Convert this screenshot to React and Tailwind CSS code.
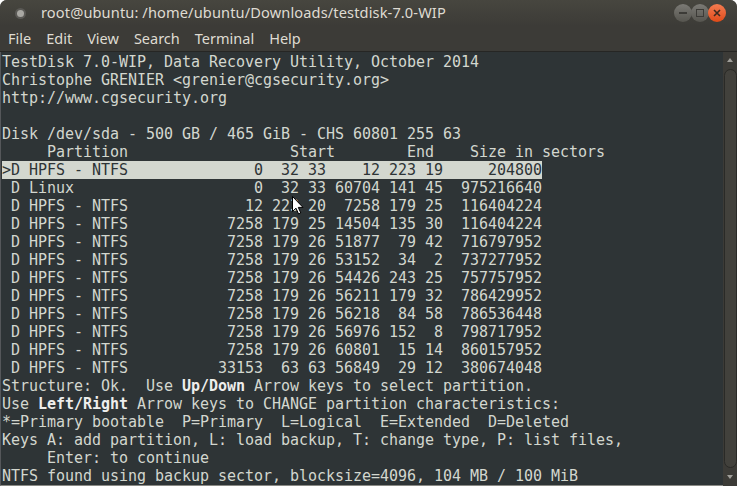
import React from "react";

const rows = [
  [">", "HPFS - NTFS", 0, 32, 33, 12, 223, 19, 204800],
  [" ", "Linux", 0, 32, 33, 60704, 141, 45, 975216640],
  [" ", "HPFS - NTFS", 12, 223, 20, 7258, 179, 25, 116404224],
  [" ", "HPFS - NTFS", 7258, 179, 25, 14504, 135, 30, 116404224],
  [" ", "HPFS - NTFS", 7258, 179, 26, 51877, 79, 42, 716797952],
  [" ", "HPFS - NTFS", 7258, 179, 26, 53152, 34, 2, 737277952],
  [" ", "HPFS - NTFS", 7258, 179, 26, 54426, 243, 25, 757757952],
  [" ", "HPFS - NTFS", 7258, 179, 26, 56211, 179, 32, 786429952],
  [" ", "HPFS - NTFS", 7258, 179, 26, 56218, 84, 58, 786536448],
  [" ", "HPFS - NTFS", 7258, 179, 26, 56976, 152, 8, 798717952],
  [" ", "HPFS - NTFS", 7258, 179, 26, 60801, 15, 14, 860157952],
  [" ", "HPFS - NTFS", 33153, 63, 63, 56849, 29, 12, 380674048],
];

const fmt = (r) => {
  const p = (v, n) => String(v).padStart(n);
  return (
    r[0] + "D " + r[1].padEnd(20) + " " + p(r[2], 5) + " " + p(r[3], 3) + " " + p(r[4], 2) +
    " " + p(r[5], 5) + " " + p(r[6], 3) + " " + p(r[7], 2) + " " + p(r[8], 10)
  );
};

const menus = ["File", "Edit", "View", "Search", "Terminal", "Help"];

function Line({ children }) {
  return <div className="h-[18px] leading-[18px]">{children}</div>;
}

export default function App() {
  return (
    <div className="w-[737px] h-[486px] bg-white overflow-hidden">
      <div className="w-full h-full flex flex-col rounded-t-[7px] overflow-hidden bg-[#3c3b37]">
        {/* title bar */}
        <div className="h-[27px] flex items-center bg-gradient-to-b from-[#47463f] to-[#3c3b37] font-['Noto_Sans',sans-serif]">
          <div className="ml-[15px] w-[11px] h-[11px] rounded-full bg-[#5a5955] flex items-center justify-center">
            <div className="w-[7px] h-[7px] rounded-full bg-[#a9a8a3]" />
          </div>
          <div className="ml-[15px] text-[14.6px] text-[#dfdbd2] tracking-[0.12px]">
            root@ubuntu: /home/ubuntu/Downloads/testdisk-7.0-WIP
          </div>
          <div className="ml-auto mr-[11px] flex items-center">
            <div className="w-[18px] h-[18px] rounded-full bg-gradient-to-b from-[#7b7a75] to-[#56554f] flex items-center justify-center">
              <div className="w-[8px] h-[2px] bg-[#3c3b37]" />
            </div>
            <div className="-ml-px w-[18px] h-[18px] rounded-full bg-gradient-to-b from-[#7b7a75] to-[#56554f] flex items-center justify-center">
              <div className="w-[8px] h-[8px] border-[1.5px] border-[#3c3b37]" />
            </div>
            <div className="-ml-px w-[18px] h-[18px] rounded-full bg-gradient-to-b from-[#f47b4f] to-[#df4a16] flex items-center justify-center">
              <svg width="8" height="8" viewBox="0 0 8 8">
                <path d="M1 1L7 7M7 1L1 7" stroke="#3c2a20" strokeWidth="1.6" />
              </svg>
            </div>
          </div>
        </div>
        {/* menu bar */}
        <div className="h-[25px] flex items-center gap-[15px] pl-[8px] text-[14.5px] text-[#dfdbd2] font-['Noto_Sans',sans-serif]">
          {menus.map((m) => (
            <span key={m}>{m}</span>
          ))}
        </div>
        {/* terminal + scrollbar */}
        <div className="flex-1 flex border-t border-[#262624]">
          <div className="relative flex-1 bg-[#2e3436] border-l border-[#55575a] border-b border-b-[#8a8a85] pl-px pt-px text-[#d3d7cf] text-[15px] tracking-[-0.03px] font-['DejaVu_Sans_Mono',monospace] whitespace-pre">
            <Line>TestDisk 7.0-WIP, Data Recovery Utility, October 2014</Line>
            <Line>Christophe GRENIER &lt;grenier@cgsecurity.org&gt;</Line>
            <Line>http://www.cgsecurity.org</Line>
            <Line> </Line>
            <Line>Disk /dev/sda - 500 GB / 465 GiB - CHS 60801 255 63</Line>
            <Line>{"     Partition                  Start        End    Size in sectors"}</Line>
            {rows.map((r, i) => (
              <Line key={i}>
                {i === 0 ? (
                  <span className="bg-[#d3d7cf] text-[#2e3436]">{fmt(r)}</span>
                ) : (
                  fmt(r)
                )}
              </Line>
            ))}
            <Line>
              Structure: Ok.  Use <b className="text-[#eeeeec]">Up/Down</b> Arrow keys to select partition.
            </Line>
            <Line>
              Use <b className="text-[#eeeeec]">Left/Right</b> Arrow keys to CHANGE partition characteristics:
            </Line>
            <Line>*=Primary bootable  P=Primary  L=Logical  E=Extended  D=Deleted</Line>
            <Line>Keys A: add partition, L: load backup, T: change type, P: list files,</Line>
            <Line>{"     Enter: to continue"}</Line>
            <Line>NTFS found using backup sector, blocksize=4096, 104 MB / 100 MiB</Line>
            <svg className="absolute left-[291px] top-[144px]" width="12" height="19" viewBox="0 0 12 19">
              <path d="M0.5 0.5L0.5 15.5L4 12.2L6.6 18L8.8 17L6.3 11.4L11 11.4Z" fill="#ffffff" stroke="#000000" strokeWidth="1" strokeLinejoin="round" />
            </svg>
          </div>
          {/* scrollbar */}
          <div className="w-[14px] bg-[#3c3b37] flex flex-col items-center pt-[4px] pb-[6px]">
            <svg width="8" height="6" viewBox="0 0 8 6" className="mt-[1px]">
              <path d="M4 1L7 5H1Z" fill="#a09f9a" />
            </svg>
            <div className="mt-[6px] flex-1 w-[13px] rounded-full border border-[#2a2a27] bg-[#42413c]" />
            <svg width="8" height="6" viewBox="0 0 8 6" className="mt-[6px]">
              <path d="M4 5L7 1H1Z" fill="#a09f9a" />
            </svg>
          </div>
        </div>
      </div>
    </div>
  );
}
